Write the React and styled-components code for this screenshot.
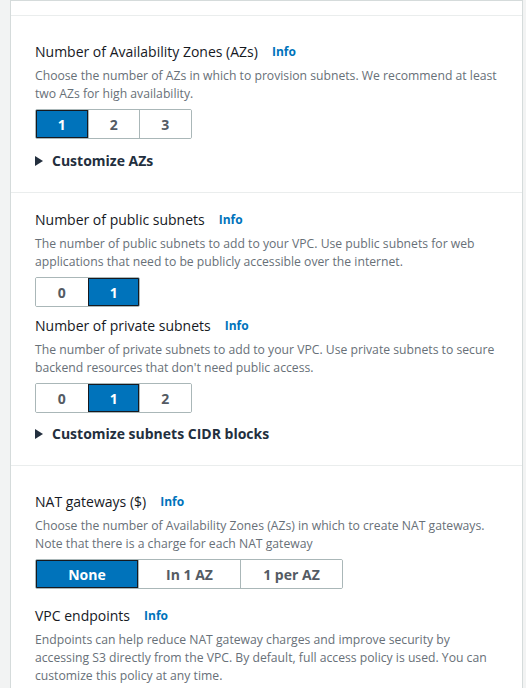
import React from "react"
import styled, { createGlobalStyle } from "styled-components"

const GlobalStyle = createGlobalStyle`
  body {
    margin: 0;
    background: #f2f3f3;
    font-family: "Open Sans", "Liberation Sans", sans-serif;
  }
`

const sections = [
  {
    top: 26,
    gap: 10,
    fields: [
      {
        title: "Number of Availability Zones (AZs)",
        desc: "Choose the number of AZs in which to provision subnets. We recommend at least two AZs for high availability.",
        options: ["1", "2", "3"],
        selected: 0,
        width: 51.5,
      },
    ],
    expander: "Customize AZs",
  },
  {
    top: 17,
    gap: 9,
    fields: [
      {
        title: "Number of public subnets",
        desc: "The number of public subnets to add to your VPC. Use public subnets for web applications that need to be publicly accessible over the internet.",
        options: ["0", "1"],
        selected: 1,
        width: 51.5,
      },
      {
        title: "Number of private subnets",
        desc: "The number of private subnets to add to your VPC. Use private subnets to secure backend resources that don't need public access.",
        options: ["0", "1", "2"],
        selected: 1,
        width: 51.5,
      },
    ],
    expander: "Customize subnets CIDR blocks",
  },
  {
    top: 26,
    gap: 17,
    fields: [
      {
        title: "NAT gateways ($)",
        desc: "Choose the number of Availability Zones (AZs) in which to create NAT gateways. Note that there is a charge for each NAT gateway",
        options: ["None", "In 1 AZ", "1 per AZ"],
        selected: 0,
        width: 102,
      },
      {
        title: "VPC endpoints",
        desc: "Endpoints can help reduce NAT gateway charges and improve security by accessing S3 directly from the VPC. By default, full access policy is used. You can customize this policy at any time.",
      },
    ],
  },
]

const App = () => {
  return (
    <Page>
      <GlobalStyle />
      <Panel>
        <TopStrip />
        {sections.map((section, i) => (
          <Section key={i} $top={section.top} $gap={section.gap}>
            {section.fields.map((field, j) => (
              <Field key={j}>
                <Title>
                  {field.title}
                  <Info>Info</Info>
                </Title>
                <Desc>{field.desc}</Desc>
                {field.options && (
                  <Segmented>
                    {field.options.map((opt, k) => (
                      <Segment key={k} $active={k === field.selected} $width={field.width}>
                        {opt}
                      </Segment>
                    ))}
                  </Segmented>
                )}
              </Field>
            ))}
            {section.expander && (
              <Expander>
                <Caret viewBox="0 0 8 10">
                  <path d="M0 0 L8 5 L0 10 Z" fill="currentColor" />
                </Caret>
                {section.expander}
              </Expander>
            )}
          </Section>
        ))}
      </Panel>
    </Page>
  )
}

export default App

const Page = styled.div`
  padding: 0 3px 0 10px;
  min-height: 688px;
  box-sizing: border-box;
`

const Panel = styled.div`
  background: #fff;
  border: 1px solid #d5dbdb;
  border-bottom: none;
  min-height: 688px;
  box-sizing: border-box;
`

const TopStrip = styled.div`
  height: 14px;
`

const Section = styled.div`
  border-top: 1px solid #eaeded;
  padding: ${(p) => p.$top}px 24px 21px;
  display: flex;
  flex-direction: column;
  gap: ${(p) => p.$gap}px;
`

const Field = styled.div`
  display: flex;
  flex-direction: column;
`

const Title = styled.div`
  font-size: 14px;
  line-height: 20px;
  color: #16191f;
  display: flex;
  align-items: center;
  gap: 14px;
`

const Info = styled.span`
  font-size: 12px;
  font-weight: 700;
  color: #0073bb;
`

const Desc = styled.p`
  margin: 5px 0 0;
  font-size: 12.2px;
  line-height: 18px;
  color: #687078;
`

const Segmented = styled.div`
  display: flex;
  margin-top: 6px;
  align-self: flex-start;
  border: 1px solid #aab7b8;
  border-radius: 2px;
  overflow: hidden;
`

const Segment = styled.div`
  width: ${(p) => p.$width}px;
  height: 28px;
  box-sizing: border-box;
  display: flex;
  align-items: center;
  justify-content: center;
  font-size: 14px;
  font-weight: 700;
  color: ${(p) => (p.$active ? "#fff" : "#545b64")};
  background: ${(p) => (p.$active ? "#0073bb" : "#fff")};
  border-left: 1px solid ${(p) => (p.$active ? "#16191f" : "#aab7b8")};
  outline: ${(p) => (p.$active ? "1px solid #16191f" : "none")};
  outline-offset: -1px;

  &:first-child {
    border-left: none;
  }
`

const Expander = styled.div`
  display: flex;
  align-items: center;
  gap: 9px;
  margin-top: 2px;
  font-size: 14px;
  line-height: 20px;
  font-weight: 700;
  color: #232f3e;
`

const Caret = styled.svg`
  width: 8px;
  height: 10px;
  color: #232f3e;
`
